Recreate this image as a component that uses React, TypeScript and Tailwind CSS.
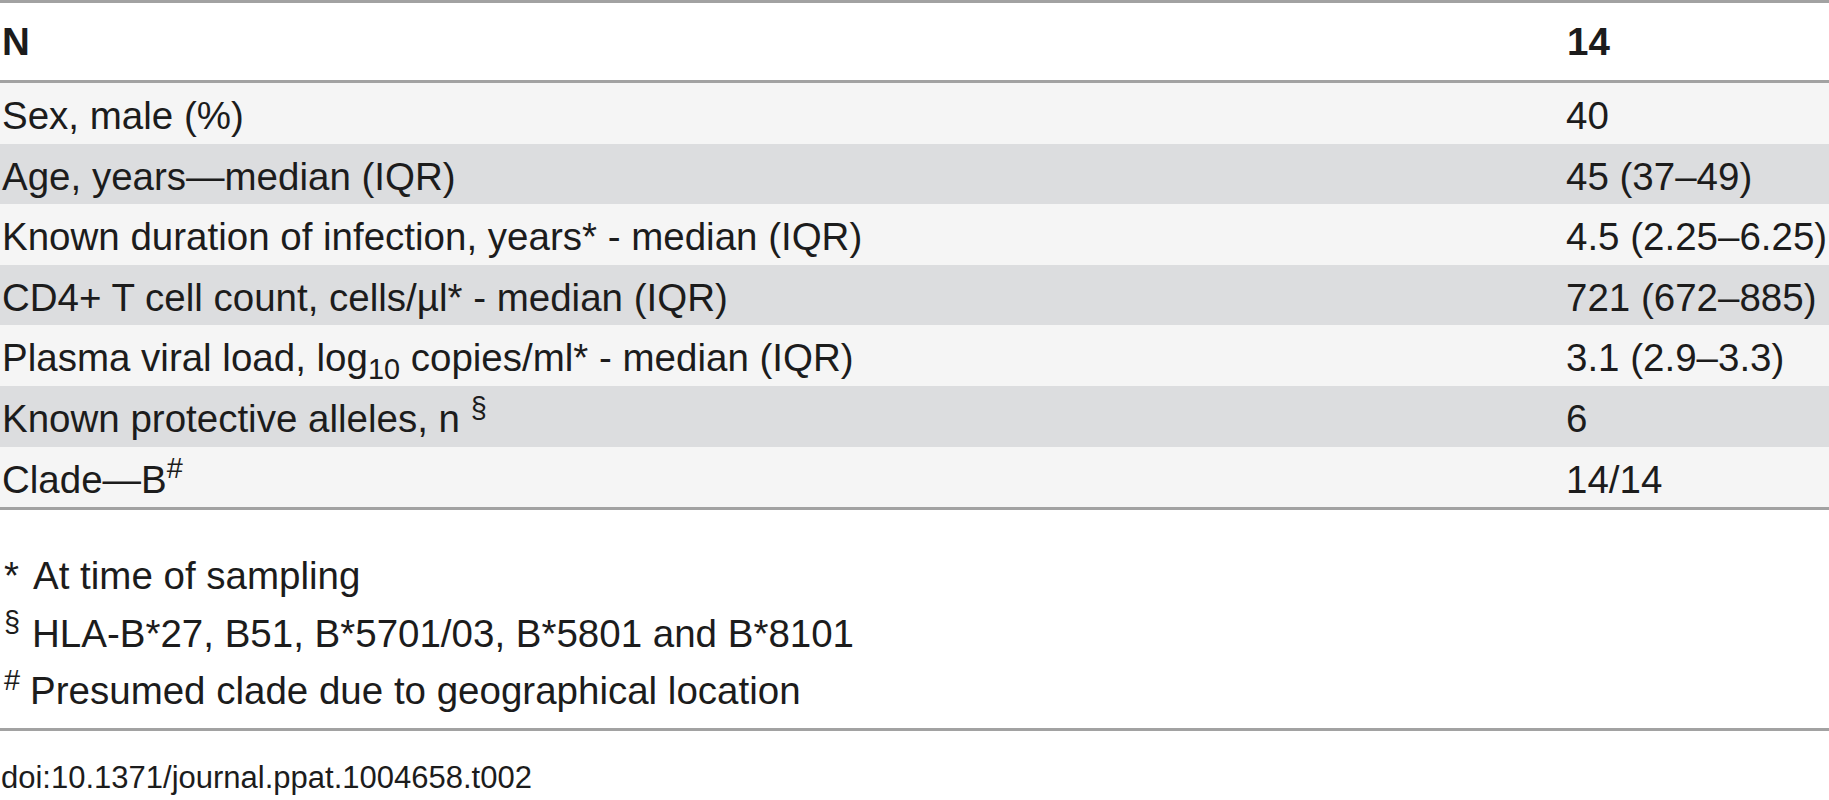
import React from "react";

const rows: { label: React.ReactNode; value: string; dark: boolean }[] = [
  { label: "Sex, male (%)", value: "40", dark: false },
  { label: "Age, years\u2014median (IQR)", value: "45 (37\u201349)", dark: true },
  { label: "Known duration of infection, years* - median (IQR)", value: "4.5 (2.25\u20136.25)", dark: false },
  { label: "CD4+ T cell count, cells/\u00b5l* - median (IQR)", value: "721 (672\u2013885)", dark: true },
  {
    label: (
      <>
        Plasma viral load, log<sub>10</sub> copies/ml* - median (IQR)
      </>
    ),
    value: "3.1 (2.9\u20133.3)",
    dark: false,
  },
  {
    label: (
      <>
        Known protective alleles, n <sup>§</sup>
      </>
    ),
    value: "6",
    dark: true,
  },
  {
    label: (
      <>
        Clade{"\u2014"}B<sup>#</sup>
      </>
    ),
    value: "14/14",
    dark: false,
  },
];

export default function App() {
  return (
    <div
      className="w-[1829px] h-[800px] bg-white text-[#1c1c1c] overflow-hidden"
      style={{ fontFamily: "'Liberation Sans', Arial, sans-serif" }}
    >
      <div className="border-t-[3px] border-b-[3px] border-[#a2a2a2]">
        <div className="flex h-[77px] pt-[20px] text-[38.5px] leading-none font-bold">
          <div className="w-[1567px] pl-[2px]">N</div>
          <div>14</div>
        </div>
      </div>
      <div className="border-b-[3px] border-[#a2a2a2]">
        {rows.map((r, i) => (
          <div
            key={i}
            className={`flex h-[60.6px] pt-[14px] text-[38.5px] leading-none ${
              r.dark ? "bg-[#dcdddf]" : "bg-[#f5f5f5]"
            }`}
          >
            <div className="w-[1566px] pl-[2px]">{r.label}</div>
            <div>{r.value}</div>
          </div>
        ))}
      </div>
      <div className="h-[221px] pt-[47px] pl-[4px] text-[38.5px] leading-none flex flex-col gap-[19px] border-b-[3px] border-[#a2a2a2]">
        <div>
          <span>*</span>
          <span className="ml-[14px]">At time of sampling</span>
        </div>
        <div>
          <sup>§</sup>
          <span className="ml-[12px]">HLA-B*27, B51, B*5701/03, B*5801 and B*8101</span>
        </div>
        <div>
          <sup>#</sup>
          <span className="ml-[10px]">Presumed clade due to geographical location</span>
        </div>
      </div>
      <div className="pt-[31px] pl-[1px] text-[31px] leading-none">
        doi:10.1371/journal.ppat.1004658.t002
      </div>
    </div>
  );
}
